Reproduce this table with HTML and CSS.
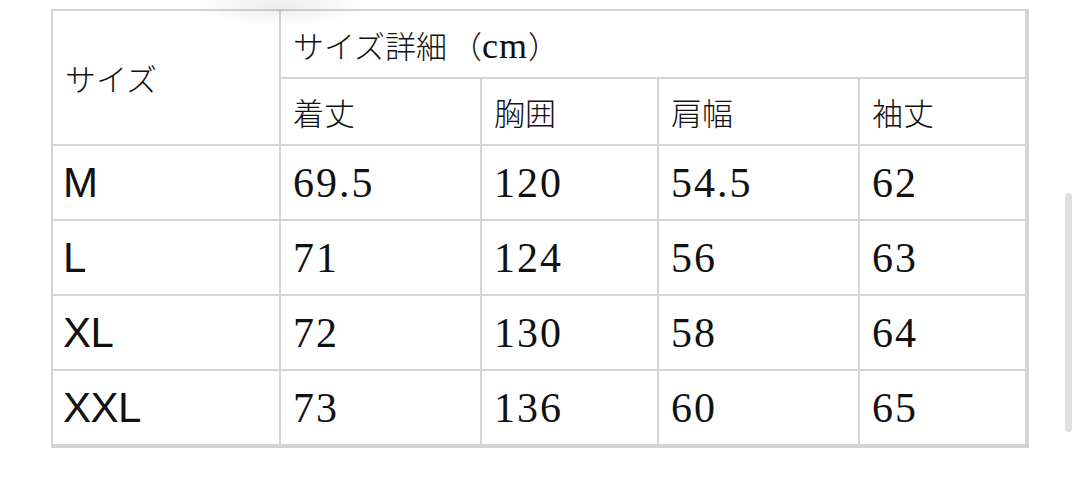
FILE: index.html
```html
<!DOCTYPE html>
<html lang="ja">
<head>
<meta charset="utf-8">
<title>サイズ表</title>
<link rel="stylesheet" href="styles.css">
</head>
<body>
<div class="page">
  <table class="size-table">
    <colgroup>
      <col class="c1"><col class="c2"><col class="c3"><col class="c4"><col class="c5">
    </colgroup>
    <thead>
      <tr class="head-top">
        <th class="jp corner" rowspan="2">サイズ</th>
        <th class="jp" colspan="4">サイズ詳細<span class="paren">（<span class="unit">cm</span>）</span></th>
      </tr>
      <tr class="head-sub">
        <th class="jp">着丈</th>
        <th class="jp">胸囲</th>
        <th class="jp">肩幅</th>
        <th class="jp">袖丈</th>
      </tr>
    </thead>
    <tbody>
      <tr><td class="size">M</td><td>69.5</td><td>120</td><td>54.5</td><td>62</td></tr>
      <tr><td class="size">L</td><td>71</td><td>124</td><td>56</td><td>63</td></tr>
      <tr><td class="size">XL</td><td>72</td><td>130</td><td>58</td><td>64</td></tr>
      <tr><td class="size">XXL</td><td>73</td><td>136</td><td>60</td><td>65</td></tr>
    </tbody>
  </table>
  <div class="top-shadow"></div>
  <div class="scroll-thumb"></div>
</div>
</body>
</html>
```
FILE: styles.css
```css
html, body {
  margin: 0;
  padding: 0;
  background: #ffffff;
}

.page {
  position: relative;
  width: 1080px;
  height: 492px;
  overflow: hidden;
  padding: 9px 0 0 51px;
  box-sizing: border-box;
}

.size-table {
  border-collapse: separate;
  border-spacing: 0;
  table-layout: fixed;
  width: 978px;
  border: 2px solid #d4d4d4;
  color: #111111;
  font-family: "Liberation Serif", "Noto Sans CJK JP", serif;
}

.c1 { width: 228px; }
.c2 { width: 201px; }
.c3 { width: 177px; }
.c4 { width: 201px; }
.c5 { width: 167px; }

.size-table th,
.size-table td {
  border-right: 2px solid #d4d4d4;
  border-bottom: 2px solid #d4d4d4;
  padding: 0 0 0 12px;
  text-align: left;
  vertical-align: middle;
  white-space: nowrap;
  font-weight: normal;
  box-sizing: border-box;
}

.size-table .jp {
  font-size: 31px;
  font-weight: 300;
}

.paren {
  margin-left: 4px;
}

.unit {
  font-size: 36px;
  letter-spacing: 1px;
}

.size-table td {
  font-size: 42px;
  letter-spacing: 2px;
}

.size-table td.size {
  font-family: "Liberation Sans", "Noto Sans", sans-serif;
  letter-spacing: -0.5px;
  padding-left: 10px;
}

.head-top { height: 68px; }
.head-sub { height: 67px; }
.size-table tbody tr { height: 75px; }

.top-shadow {
  position: absolute;
  left: 200px;
  top: -14px;
  width: 160px;
  height: 40px;
  background: radial-gradient(ellipse at center, rgba(0, 0, 0, 0.07) 0%, rgba(0, 0, 0, 0.03) 45%, rgba(0, 0, 0, 0) 72%);
  pointer-events: none;
}

.scroll-thumb {
  position: absolute;
  left: 1065px;
  top: 193px;
  width: 7px;
  height: 239px;
  border-radius: 4px;
  background: #e0e0e0;
}
```
